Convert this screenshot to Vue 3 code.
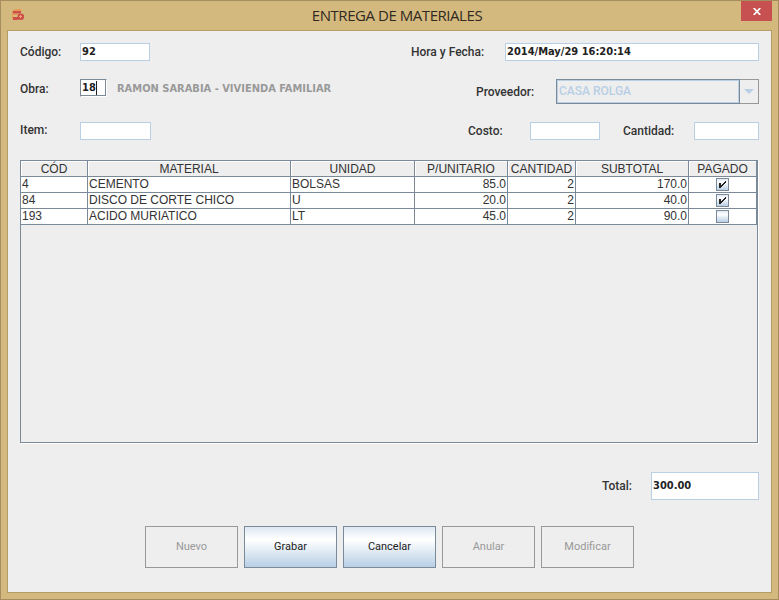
<script setup>
import { ref } from 'vue'

const columns = ['CÓD', 'MATERIAL', 'UNIDAD', 'P/UNITARIO', 'CANTIDAD', 'SUBTOTAL', 'PAGADO']
const rows = ref([
  { code: '4', material: 'CEMENTO', unit: 'BOLSAS', price: '85.0', qty: '2', subtotal: '170.0', paid: true },
  { code: '84', material: 'DISCO DE CORTE CHICO', unit: 'U', price: '20.0', qty: '2', subtotal: '40.0', paid: true },
  { code: '193', material: 'ACIDO MURIATICO', unit: 'LT', price: '45.0', qty: '2', subtotal: '90.0', paid: false },
])
const buttons = [
  { label: 'Nuevo', enabled: false },
  { label: 'Grabar', enabled: true },
  { label: 'Cancelar', enabled: true },
  { label: 'Anular', enabled: false },
  { label: 'Modificar', enabled: false },
]
</script>

<template>
  <div class="window">
    <header class="titlebar">
      <svg class="app-icon" width="13" height="12" viewBox="0 0 13 12">
        <path d="M3 .5h6M1 1.500h8.500M.5 2v8" stroke="#e59a55" fill="none" />
        <path d="M1 2h8v2.500H1zM1 8h5.500v3H1z" fill="#cc4f49" />
        <path d="M1 5h6v2.500H1z" fill="#dfba78" />
        <path d="M1 5h7v.8H1z" fill="#e38f50" />
        <circle cx="8.800" cy="7.700" r="3.300" fill="#cc4f49" />
        <path d="M8.500 6v3M7 7.500h3" stroke="#eda66b" />
      </svg>
      <h1 class="title">ENTREGA DE MATERIALES</h1>
      <button class="close" aria-label="Cerrar">
        <svg width="8" height="7" viewBox="0 0 8 7"><path d="M.7 0l6.600 7M7.300 0L.7 7" stroke="#fff" stroke-width="1.700" /></svg>
      </button>
    </header>

    <main class="content">
      <div class="line line-code">
        <span class="label codigo">Código:</span>
        <div class="field code">92</div>
        <span class="label hora">Hora y Fecha:</span>
        <div class="field date">2014/May/29 16:20:14</div>
      </div>
      <div class="line line-work">
        <span class="label obra">Obra:</span>
        <div class="field work">18<i class="caret"></i></div>
        <span class="work-name">RAMON SARABIA - VIVIENDA FAMILIAR</span>
        <span class="label proveedor">Proveedor:</span>
        <div class="combo">
          <span class="combo-value"><span>CASA ROLGA</span></span>
          <span class="combo-arrow">
            <svg width="10" height="5" viewBox="0 0 10 5"><path d="M0 0h10L5 5z" fill="#b8cfe5" /></svg>
          </span>
        </div>
      </div>
      <div class="line line-item">
        <span class="label item">Item:</span>
        <div class="field item-field"></div>
        <span class="label costo">Costo:</span>
        <div class="field cost-field"></div>
        <span class="label cantidad">Cantidad:</span>
        <div class="field qty-field"></div>
      </div>

      <section class="scroll">
        <div class="row head">
          <div v-for="c in columns" :key="c" class="th"><span>{{ c }}</span></div>
        </div>
        <div v-for="r in rows" :key="r.code" class="row">
          <div class="td">{{ r.code }}</div>
          <div class="td">{{ r.material }}</div>
          <div class="td">{{ r.unit }}</div>
          <div class="td num">{{ r.price }}</div>
          <div class="td num">{{ r.qty }}</div>
          <div class="td num">{{ r.subtotal }}</div>
          <div class="td mid">
            <span class="check">
              <svg v-if="r.paid" width="7" height="7" viewBox="0 0 7 7" shape-rendering="crispEdges">
                <path d="M0 2h2v2h1v-1h1v-1h1v-1h1v-1h1v2h-1v1h-1v1h-1v1h-1v1h-1v1H0z" fill="#222" />
              </svg>
            </span>
          </div>
        </div>
      </section>

      <div class="total">
        <span class="label total-label">Total:</span>
        <div class="field total-field">300.00</div>
      </div>

      <div class="actions">
        <button v-for="b in buttons" :key="b.label" class="btn" :class="{ off: !b.enabled }">{{ b.label }}</button>
      </div>
    </main>
  </div>
</template>

<style>
body {
  margin: 0;
}
</style>

<style scoped>
* {
  box-sizing: border-box;
}
.window {
  width: 779px;
  height: 600px;
  padding: 0 6px 6px;
  border: 1px solid #a48e60;
  background: #d4b97f;
  display: flex;
  flex-direction: column;
  color: #333;
  font-family: "Liberation Sans", Arial, sans-serif;
}
.titlebar {
  height: 29px;
  flex: none;
  display: flex;
  align-items: flex-start;
}
.app-icon {
  margin: 8px 0 0 5px;
}
.title {
  flex: 1;
  margin: 3px 0 0 3px;
  padding-left: 25px;
  text-align: center;
  font: 400 15px/22px "Open Sans", "Noto Sans", sans-serif;
  letter-spacing: -0.45px;
  color: #30291f;
}
.close {
  width: 31px;
  height: 20px;
  padding: 0;
  border: 0;
  background: #c75050;
  display: grid;
  place-items: center;
}
.content {
  flex: 1;
  border: 1px solid #b59c67;
  background: #eee;
  padding: 12px 12px 0;
  display: flex;
  flex-direction: column;
}
.line {
  display: flex;
  align-items: flex-start;
  flex: none;
}
.line-code {
  height: 36px;
}
.line-work {
  height: 43px;
}
.line-item {
  height: 38px;
}
.label {
  font: 500 12px/18px Roboto, sans-serif;
  white-space: nowrap;
  color: #333;
}
.codigo,
.obra,
.item {
  width: 60px;
}
.hora {
  width: 94px;
  margin-left: auto;
}
.obra {
  padding-top: 1px;
}
.proveedor {
  width: 80px;
  margin-left: auto;
  padding-top: 4px;
}
.item {
  margin-top: -1px;
}
.costo {
  width: 62px;
  margin-left: auto;
}
.cantidad {
  width: 71px;
  margin-left: 23px;
}
.field {
  height: 18px;
  border: 1px solid #b8cfe5;
  background: #fff;
  padding-left: 1px;
  font: 700 11px/16px "DejaVu Sans Condensed", "DejaVu Sans", sans-serif;
  font-stretch: condensed;
  white-space: nowrap;
  color: #222;
}
.code {
  width: 70px;
}
.date {
  width: 254px;
}
.work {
  width: 27px;
  height: 18px;
  border: 1px solid #7a8a99;
  border-right-color: #fff;
  border-bottom-color: #fff;
  box-shadow: inset -1px -1px #7a8a99;
  display: flex;
}
.caret {
  width: 1px;
  height: 14px;
  margin-top: 1px;
  background: #222;
}
.work-name {
  margin: 1px 0 0 10px;
  font: 700 11px/18px "DejaVu Sans Condensed", "DejaVu Sans", sans-serif;
  font-stretch: condensed;
  color: #999;
  white-space: nowrap;
}
.combo {
  width: 203px;
  height: 25px;
  display: flex;
}
.combo-value {
  width: 184px;
  border: 1px solid #7a8a99;
  box-shadow: inset 0 0 0 1px #b8cfe5;
  padding-left: 2px;
  font: 500 12px/23px Roboto, sans-serif;
  color: #b8cfe5;
}
.combo-arrow {
  flex: 1;
  border: 1px solid #999;
  border-left: 0;
  display: grid;
  place-items: center;
}
.item-field {
  width: 71px;
}
.cost-field {
  width: 70px;
}
.qty-field {
  width: 65px;
}
.scroll {
  width: 738px;
  height: 283px;
  flex: none;
  border: 1px solid #7a8a99;
  box-shadow: 1px 1px #fff;
}
.row {
  display: grid;
  grid-template-columns: 67px 203px 124px 93px 68px 113px 68px;
  height: 16px;
}
.th,
.td {
  border-right: 1px solid #7a8a99;
  border-bottom: 1px solid #7a8a99;
  font-size: 12px;
  line-height: 15px;
  white-space: nowrap;
}
.th {
  box-shadow: inset 1px 1px #fff;
  line-height: 17px;
  height: 16px;
  text-align: center;
}
.td {
  background: #fff;
  padding: 0 1px;
}
.num {
  text-align: right;
}
.mid {
  display: grid;
  place-items: center;
}
.check {
  width: 13px;
  height: 13px;
  border: 1px solid #7a8a99;
  background: linear-gradient(#dde8f3, #fff 30%, #b8cfe5);
  display: grid;
  place-items: center;
}
.total {
  margin-top: 29px;
  display: flex;
  align-items: center;
  justify-content: flex-end;
}
.total-label {
  width: 49px;
}
.total-field {
  width: 108px;
  height: 28px;
  line-height: 26px;
}
.actions {
  margin: 26px 0 0 125px;
  display: flex;
  gap: 6px;
}
.btn {
  width: 93px;
  height: 42px;
  padding: 0;
  border: 1px solid #7a8a99;
  background: linear-gradient(#dde8f3, #fff 30%, #fff 32%, #b8cfe5);
  font: 400 11px/14px Roboto, sans-serif;
  color: #222;
}
.btn.off {
  border-color: #999;
  background: #eee;
  color: #999;
}
</style>
